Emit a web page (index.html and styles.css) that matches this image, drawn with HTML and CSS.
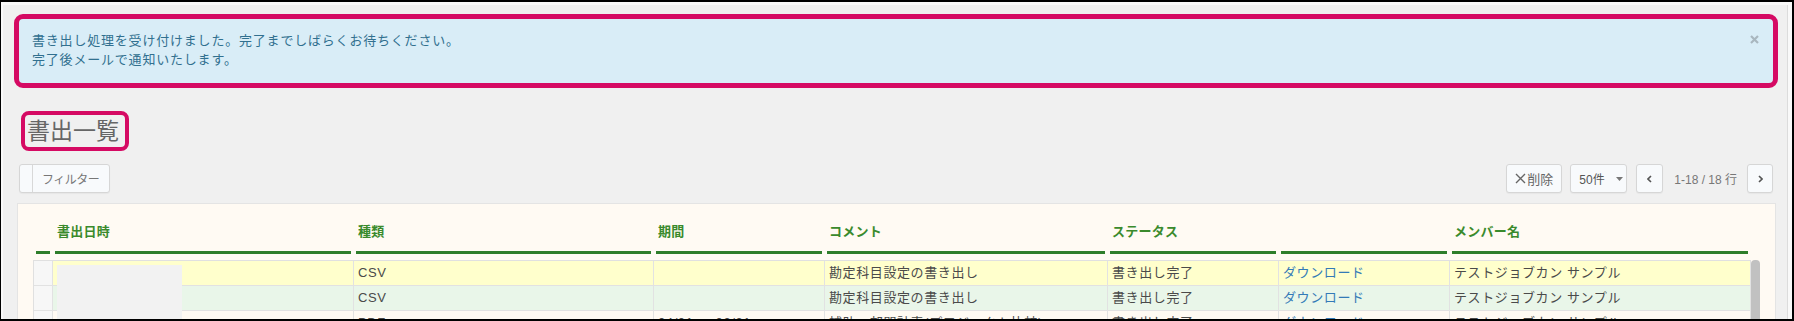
FILE: index.html
```html
<!DOCTYPE html>
<html lang="ja">
<head>
<meta charset="utf-8">
<title>書出一覧</title>
<link rel="stylesheet" href="styles.css">
</head>
<body>
<div class="screen">
  <div class="window">
    <div class="page">
      <div class="alert">
        <div class="alert-text">書き出し処理を受け付けました。完了までしばらくお待ちください。<br>完了後メールで通知いたします。</div>
        <span class="close" aria-label="閉じる"><svg width="9" height="9" viewBox="0 0 9 9"><path d="M1 1L8 8M8 1L1 8" stroke="#a9b7bf" stroke-width="2.2"/></svg></span>
      </div>

      <h1 class="title">書出一覧</h1>

      <div class="toolbar">
        <div class="btn filter"><span class="seg"></span><span class="label">フィルター</span></div>
        <div class="tools">
          <div class="btn del"><svg width="11" height="11" viewBox="0 0 11 11"><path d="M1 1L10 10M10 1L1 10" stroke="#666" stroke-width="1.4"/></svg><span>削除</span></div>
          <div class="btn per"><span>50件</span><svg width="7" height="4" viewBox="0 0 7 4"><path d="M0 0H7L3.5 4Z" fill="#777"/></svg></div>
          <div class="btn nav prev"><svg width="5" height="8" viewBox="0 0 5 8"><path d="M4 1L1 4L4 7" fill="none" stroke="#555" stroke-width="1.6"/></svg></div>
          <span class="count">1-18 / 18 行</span>
          <div class="btn nav next"><svg width="5" height="8" viewBox="0 0 5 8"><path d="M1 1L4 4L1 7" fill="none" stroke="#555" stroke-width="1.6"/></svg></div>
        </div>
      </div>

      <div class="panel">
        <div class="grid head">
          <div class="hc"></div>
          <div class="hc">書出日時</div>
          <div class="hc">種類</div>
          <div class="hc">期間</div>
          <div class="hc">コメント</div>
          <div class="hc">ステータス</div>
          <div class="hc"></div>
          <div class="hc">メンバー名</div>
        </div>
        <div class="bodywrap">
          <div class="table">
            <div class="grid row yellow">
              <div class="cell chk"></div>
              <div class="cell"></div>
              <div class="cell">CSV</div>
              <div class="cell"></div>
              <div class="cell">勘定科目設定の書き出し</div>
              <div class="cell">書き出し完了</div>
              <div class="cell"><a class="link">ダウンロード</a></div>
              <div class="cell">テストジョブカン サンプル</div>
            </div>
            <div class="grid row green">
              <div class="cell chk"></div>
              <div class="cell"></div>
              <div class="cell">CSV</div>
              <div class="cell"></div>
              <div class="cell">勘定科目設定の書き出し</div>
              <div class="cell">書き出し完了</div>
              <div class="cell"><a class="link">ダウンロード</a></div>
              <div class="cell">テストジョブカン サンプル</div>
            </div>
            <div class="grid row plain">
              <div class="cell chk"></div>
              <div class="cell"></div>
              <div class="cell">PDF</div>
              <div class="cell">04/01 ～ 03/31</div>
              <div class="cell">補助・部門計表(プロジェクト比較)</div>
              <div class="cell">書き出し完了</div>
              <div class="cell"><a class="link">ダウンロード</a></div>
              <div class="cell">テストジョブカン サンプル</div>
            </div>
          </div>
          <div class="scroll"></div>
          <div class="redact"></div>
        </div>
      </div>
    </div>
  </div>
</div>
</body>
</html>
```

FILE: styles.css
```css
html, body {
  margin: 0;
  padding: 0;
  background: #000;
}

.screen {
  width: 1794px;
  height: 321px;
  box-sizing: border-box;
  border: 2px solid #000;
  border-left-width: 1px;
  overflow: hidden;
  display: flex;
}

.window {
  flex: 1;
  display: flex;
  background: #f9f9f9;
  padding: 3px 4px 0 2px;
}

.page {
  flex: 1;
  background: #f0f0f0;
  border-right: 1px solid #dcdcdc;
  overflow: hidden;
  font-family: "Liberation Sans", "Noto Sans CJK JP", sans-serif;
  display: flex;
  flex-direction: column;
}

/* alert */
.alert {
  margin: 9px 9px 0 11px;
  border: 5px solid #d50a63;
  border-radius: 9px;
  background: #d9edf7;
  padding: 12px 14px 14px 13px;
  display: flex;
  align-items: flex-start;
  color: #31708f;
  font-size: 13px;
  line-height: 19px;
  letter-spacing: 0.8px;
}

.alert-text {
  flex: 1;
}

.close {
  display: flex;
  margin-top: 4px;
}

/* title */
.title {
  display: block;
  width: fit-content;
  margin: 23px 0 0 18px;
  border: 4px solid #d50a63;
  border-radius: 8px;
  padding: 0 6px 0 2px;
  font-size: 23px;
  line-height: 32px;
  font-weight: normal;
  color: #666;
}

/* toolbar */
.toolbar {
  display: flex;
  justify-content: space-between;
  margin: 13px 14px 0 16px;
}

.btn {
  box-sizing: border-box;
  height: 29px;
  border: 1px solid #d6d6d6;
  border-radius: 3px;
  background: #f8fafc;
  box-shadow: 0 1px 1px rgba(0, 0, 0, 0.04);
  display: flex;
  align-items: center;
  font-size: 12px;
  color: #666;
}

.filter {
  width: 91px;
  align-items: stretch;
}

.filter .seg {
  width: 12px;
  border-right: 1px solid #d8d8d8;
}

.filter .label {
  padding-left: 9px;
  display: flex;
  align-items: center;
  color: #777;
  letter-spacing: -0.5px;
}

.tools {
  display: flex;
  align-items: center;
}

.del {
  width: 56px;
  padding-left: 8px;
  gap: 1px;
  font-size: 13px;
  color: #666;
}

.per {
  width: 57px;
  margin-left: 8px;
  padding-left: 8px;
  color: #555;
}

.per svg {
  margin-left: 11px;
}

.nav {
  justify-content: center;
}

.prev {
  width: 27px;
  margin-left: 9px;
}

.next {
  width: 26px;
}

.count {
  margin: 0 10px 0 11px;
  font-size: 12px;
  color: #777;
}

/* panel */
.panel {
  flex: 1;
  margin: 10px 11px 0 14px;
  border: 1px solid #e4e4e4;
  border-bottom: none;
  background: #fffaf3;
  padding: 0 15px;
}

.grid {
  display: grid;
  grid-template-columns: 19px 301px 300px 171px 283px 171px 171px 301px;
}

.head {
  padding-left: 1px;
  width: 1718px;
  box-sizing: border-box;
}

.hc {
  margin: 0 3px 6px 2px;
  padding: 19px 0 10px 2px;
  border-bottom: 3px solid #2e7d2a;
  font-size: 13px;
  line-height: 18px;
  font-weight: bold;
  color: #3a8a2c;
  letter-spacing: 0.25px;
  white-space: nowrap;
}

.bodywrap {
  position: relative;
  display: flex;
  align-items: flex-start;
}

.table {
  border-left: 1px solid #e0e0e0;
  border-top: 1px solid #e0e0e0;
}

.cell {
  box-sizing: border-box;
  height: 25px;
  border-right: 1px solid #e2e2e2;
  border-bottom: 1px solid #e2e2e2;
  padding-left: 4px;
  line-height: 24px;
  font-size: 13px;
  color: #4a4a4a;
  letter-spacing: 0.6px;
  white-space: nowrap;
  overflow: hidden;
}

.yellow .cell {
  background: #ffffcc;
}

.green .cell {
  background: #e9f6e9;
}

.plain .cell {
  background: #fffaf3;
}

.row .chk {
  background: #f7f7f7;
}

.link {
  color: #337ab7;
  text-decoration: none;
}

.scroll {
  width: 9px;
  height: 120px;
  background: #c1c1c1;
  border-radius: 4px 4px 0 0;
}

.redact {
  position: absolute;
  left: 24px;
  top: 5px;
  width: 125px;
  height: 120px;
  background: #f2f2f2;
}
```
